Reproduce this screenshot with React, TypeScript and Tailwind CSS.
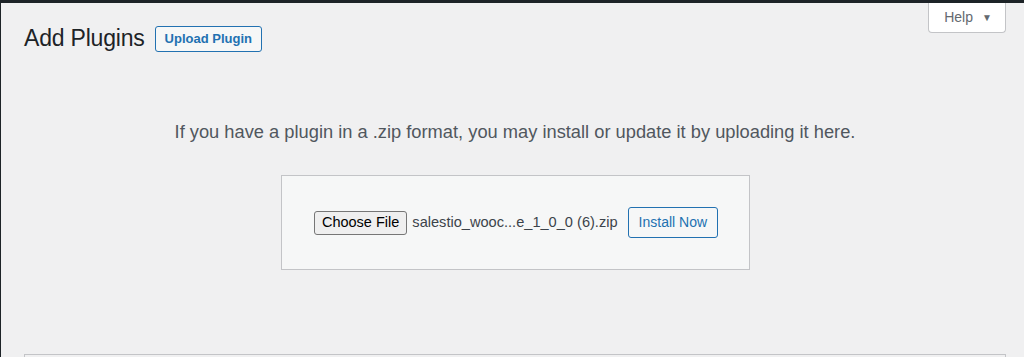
export default function App() {
  return (
    <div className="relative h-[357px] w-[1024px] overflow-hidden bg-[#f0f0f1] font-['Liberation_Sans',Arial,sans-serif]">
      <div className="h-[3px] w-full bg-[#1d2327]" />
      <div className="flex h-[354px]">
        <div className="w-px bg-[#1d2327]" />
        <div className="relative flex-1 pl-[23px] pr-[18px]">
          <div className="absolute right-[18px] top-0 flex h-[30px] w-[78px] items-center justify-center gap-[9px] rounded-b-[4px] border border-t-0 border-[#c3c4c7] bg-white pl-[2px] text-[14px] text-[#646970]">
            <span>Help</span>
            <span className="text-[10px]">▼</span>
          </div>
          <div className="flex items-center gap-[10px] pt-[21px]">
            <h1 className="text-[23px] leading-[29px] tracking-[-0.2px] text-[#1d2327]">Add Plugins</h1>
            <button className="h-[26px] rounded-[3px] border border-[#2271b1] bg-[#f6f7f7] px-[9px] text-[13px] font-semibold text-[#2271b1]">
              Upload Plugin
            </button>
          </div>
          <p className="mt-[67px] text-center text-[18.3px] leading-[24px] text-[#50575e]">
            If you have a plugin in a .zip format, you may install or update it by uploading it here.
          </p>
          <div className="mx-auto mt-[31px] flex h-[95px] w-[469px] items-center justify-center border border-[#c3c4c7] bg-[#f6f7f7] pl-[2px]">
            <button className="h-[24px] rounded-[3px] border border-[#767676] bg-[#efefef] px-[7px] text-[14.5px] text-black">
              Choose File
            </button>
            <span className="ml-[5px] text-[14.6px] text-[#3c434a]">salestio_wooc...e_1_0_0 (6).zip</span>
            <button className="ml-[10px] h-[31px] rounded-[3px] border border-[#2271b1] bg-[#f6f7f7] px-[10px] text-[14px] text-[#2271b1]">
              Install Now
            </button>
          </div>
          <div className="mt-[84px] h-[10px] border border-[#c3c4c7] bg-[#f0f0f1]" />
        </div>
      </div>
    </div>
  );
}
